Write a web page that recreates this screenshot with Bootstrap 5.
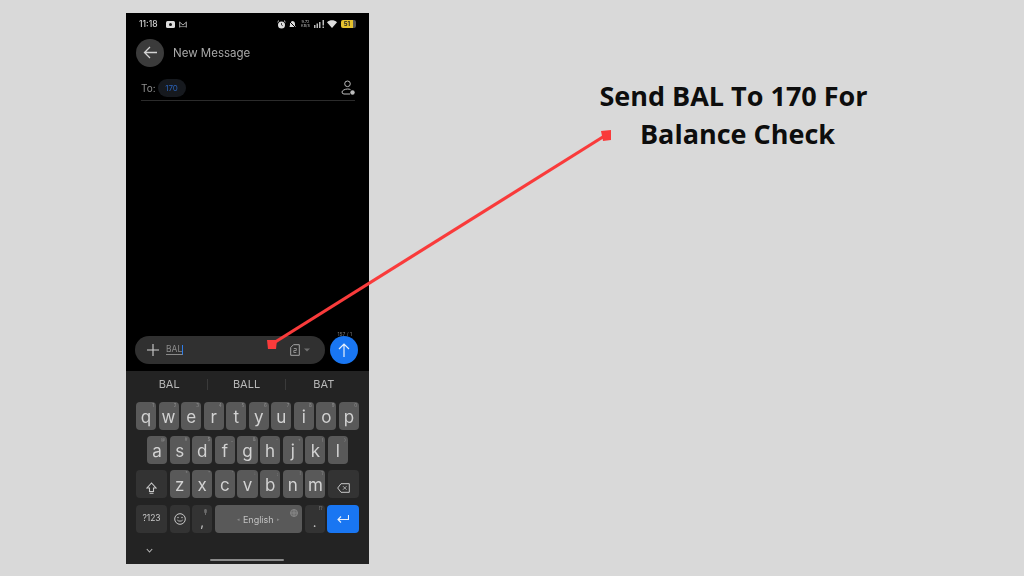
<!DOCTYPE html>
<html lang="en">
<head>
<meta charset="utf-8">
<title>Send BAL To 170</title>
<link href="https://cdn.jsdelivr.net/npm/bootstrap@5.3.0/dist/css/bootstrap.min.css" rel="stylesheet">
<style>
html,body{height:100%;margin:0}
body{background:#d9d9d9;width:1024px;height:576px;overflow:hidden;font-family:"Inter","Noto Sans",sans-serif}
.stage{width:1024px;height:576px;padding:13px 0 0 126px}
.phone{width:243px;height:551px;background:#000;color:#c9c9c9;filter:blur(.4px)}
.statusline{height:23px;padding:0 13px 0 13px;font-size:8.5px;color:#d5d5d5;font-weight:500}
.statusright{gap:4px}
.pull-in{margin-left:-2px}
.appbar{height:34px;padding:2px 10px 0;gap:9px;font-size:11.5px;color:#a9a9a9}
.backbtn{width:28px;height:28px;background:#3b3b3b;border-radius:50%;margin-top:-2px}
.toline{height:31px;margin:0 14px 0 15px;border-bottom:1px solid #2b2b2b;font-size:10px;color:#8f8f8f;padding-top:6px}
.toline span:first-child{padding-top:1px}
.chip{background:#16191e;color:#2a62b8;border-radius:10px;height:18px;width:28px;font-size:8px;margin-left:2px}
.spacer{height:232px}
.composer{height:35px;padding:0 11px 0 9px;position:relative}
.inputpill{width:190px;height:28px;background:#303030;border-radius:14px;padding:0 15px 0 12px;color:#8c8c8c;font-size:8.5px}
.typed{border-bottom:1px solid #8a8a8a;line-height:9px;margin-left:7px;border-right:1.2px solid #2f7de8}
.counter{position:absolute;right:17px;top:-2px;font-size:5px;color:#777}
.sendbtn{width:28px;height:28px;background:#1976f2;border-radius:50%}
.kbd-pane{background:#232323;margin-top:3px;padding-top:1px}
.suggest{height:24px;font-size:11px;color:#b8b8b8;padding:1px 7px 0 5px}
.suggest span{flex:1 1 0;text-align:center}
.suggest span+span{border-left:1px solid #3a3a3a;line-height:11px}
.keyrow{height:28px;margin-bottom:6.3px;gap:2.5px;padding:0 10px}
.keyrow.inset{padding:0 21px}
.keyrow.first{margin-top:6px}
.kk{flex:1 1 0;height:28px;border-radius:4px;background:#595959;color:#d2d2d2;font-size:17px;position:relative;line-height:1;padding-top:7px}
.kk sup{position:absolute;top:2px;right:2px;font-size:4.5px;color:#8e8e8e;line-height:1}
.kk.dark{background:#333;color:#c9c9c9}
.kk.shift,.kk.back,.kk.sym{flex:0 0 31px}
.kk.sym{font-size:8.5px;padding-top:0}
.kk.emoji,.kk.comma,.kk.dot{flex:0 0 20px;padding-top:0}
.kk.space{flex:0 0 87.5px;font-size:9px;padding-top:1px;color:#c2c2c2;gap:3px}
.kk.enter{flex:0 0 32px;background:#1976f2;padding-top:0}
.kk.comma,.kk.dot{font-size:13px;padding-top:8px}
.tiny-tri{font-size:5px;color:#888}
.kbfoot{height:25px;padding:9px 20px 0;position:relative}
.homebar{position:absolute;left:84px;top:20px;width:74px;height:2px;background:#8a8a8a;border-radius:1px}
.caption{position:absolute;left:580px;top:77px;width:307px;font-family:"Open Sans","Noto Sans",sans-serif;font-weight:700;font-size:27px;line-height:38px;color:#0d0d0d;text-align:center;margin:0}
.caption-second{display:block;padding-left:8px}
.pointer{position:absolute;left:0;top:0;width:1024px;height:576px;pointer-events:none}
.batt{background:#e5c12e;color:#222;font-size:6px;font-weight:700;width:12px;height:8px;border-radius:2px 0 0 2px;line-height:8px;text-align:center}
.batt-rest{background:#555;width:3px;height:8px;border-radius:0 2px 2px 0}
.netspeed{font-size:3.8px;line-height:4.2px;color:#a5a5a5;text-align:center;width:9px}
</style>
</head>
<body>
<div class="stage">
  <div class="phone d-flex flex-column">
    <div class="statusline d-flex align-items-center justify-content-between">
      <div class="d-flex align-items-center gap-1">
        <span class="me-1">11:18</span>
        <svg width="9" height="7" viewBox="0 0 9 7"><rect width="9" height="7" rx="1.5" fill="#ddd"/><circle cx="4.5" cy="3.5" r="1.5" fill="#111"/></svg>
        <svg width="8" height="7" viewBox="0 0 8 7" fill="none" stroke="#aaa"><path d="M.7 6.500V.8M7.300 6.500V.8M.7 1.200 4 4l3.300-2.800"/><path d="M.7 5.600h6.600" stroke-width=".7"/></svg>
      </div>
      <div class="statusright d-flex align-items-center">
        <svg width="9" height="9" viewBox="0 0 9 9"><circle cx="4.5" cy="5" r="3.5" fill="#ddd"/><path d="M4.500 3v2l1.300.8" stroke="#222" stroke-width=".8" fill="none"/><path d="M.5 2 2 .6M8.500 2 7 .6" stroke="#ddd"/></svg>
        <svg class="pull-in" width="9" height="9" viewBox="0 0 9 9"><path d="M4 1c2 0 3 1.300 3 3v2l1 1H1.500L2 5V3z" fill="#ddd"/><path d="M1 1l7 7" stroke="#000"/></svg>
        <div class="netspeed">9.72<br>KB/S</div>
        <svg width="11" height="8" viewBox="0 0 11 8" fill="#bbb"><rect y="5" width="1.500" height="3"/><rect x="2.500" y="3.500" width="1.500" height="4.500"/><rect x="5" y="2" width="1.500" height="6"/><rect x="8.500" y="0" width="1.500" height="5.500"/><rect x="8.500" y="6.500" width="1.500" height="1.500"/></svg>
        <svg class="pull-in" width="10" height="8" viewBox="0 0 10 8"><path d="M0 2.200C3 -.4 7 -.4 10 2.200L5 8z" fill="#ddd"/></svg>
        <div class="d-flex align-items-center"><span class="batt">51</span><span class="batt-rest"></span></div>
      </div>
    </div>

    <div class="appbar d-flex align-items-center">
      <div class="backbtn d-flex align-items-center justify-content-center">
        <svg width="15" height="13" viewBox="0 0 15 13" fill="none" stroke="#d3d3d3" stroke-width="1.300"><path d="M14 6.500H1.500M7 1 1.500 6.500 7 12"/></svg>
      </div>
      <span>New Message</span>
    </div>

    <div class="toline d-flex align-items-center">
      <span>To:</span>
      <span class="chip d-flex align-items-center justify-content-center">170</span>
      <svg class="ms-auto" width="14" height="16" viewBox="0 0 14 16" fill="none" stroke="#bdbdbd" stroke-width="1"><circle cx="6.500" cy="3.800" r="2.800"/><path d="M9 14H3a2 2 0 0 1-2-2c0-1.500 3-3 5.500-3 1.200 0 2.200.2 3 .6"/><circle cx="11.500" cy="12.500" r="2.200" fill="#bdbdbd" stroke="none"/></svg>
    </div>

    <div class="spacer"></div>

    <div class="composer d-flex align-items-center justify-content-between">
      <span class="counter">157 / 1</span>
      <div class="inputpill d-flex align-items-center">
        <svg width="12" height="12" viewBox="0 0 13 13" stroke="#cfcfcf" stroke-width="1.200"><path d="M6.500 0v13M0 6.500h13"/></svg>
        <span class="typed">BAL</span>
        <svg class="ms-auto" width="10" height="12" viewBox="0 0 10 12" fill="none" stroke="#a5a5a5"><path d="M3.500.7H9.300V11.300H.7V3.500z"/><path d="M3.800 4.500h2.500v2H3.800v2h2.500" stroke-width=".8"/></svg>
        <svg class="ms-1" width="6" height="4" viewBox="0 0 6 4"><path d="M0 .5h6L3 3.500z" fill="#6f6f6f"/></svg>
      </div>
      <div class="sendbtn d-flex align-items-center justify-content-center">
        <svg width="12" height="14" viewBox="0 0 12 14" fill="none" stroke="#e8f0fb" stroke-width="1.200"><path d="M6 14V1M1 6l5-5 5 5"/></svg>
      </div>
    </div>

    <div class="kbd-pane flex-grow-1">
      <div class="suggest d-flex align-items-center">
        <span>BAL</span><span>BALL</span><span>BAT</span>
      </div>
      <div class="keyrow first d-flex">
        <div class="kk text-center">q<sup>1</sup></div><div class="kk text-center">w<sup>2</sup></div><div class="kk text-center">e<sup>3</sup></div><div class="kk text-center">r<sup>4</sup></div><div class="kk text-center">t<sup>5</sup></div><div class="kk text-center">y<sup>6</sup></div><div class="kk text-center">u<sup>7</sup></div><div class="kk text-center">i<sup>8</sup></div><div class="kk text-center">o<sup>9</sup></div><div class="kk text-center">p<sup>0</sup></div>
      </div>
      <div class="keyrow inset d-flex">
        <div class="kk text-center">a<sup>@</sup></div><div class="kk text-center">s<sup>#</sup></div><div class="kk text-center">d<sup>$</sup></div><div class="kk text-center">f<sup>_</sup></div><div class="kk text-center">g<sup>&amp;</sup></div><div class="kk text-center">h<sup>-</sup></div><div class="kk text-center">j<sup>+</sup></div><div class="kk text-center">k<sup>(</sup></div><div class="kk text-center">l<sup>)</sup></div>
      </div>
      <div class="keyrow d-flex">
        <div class="kk dark shift d-flex align-items-center justify-content-center">
          <svg width="11" height="12" viewBox="0 0 11 12" fill="none" stroke="#c9c9c9" stroke-width="1.100"><path d="M5.500 1 1 6h2.500v3.500h4V6H10zM3.500 11.300h4"/></svg>
        </div>
        <div class="kk text-center">z<sup>*</sup></div><div class="kk text-center">x<sup>"</sup></div><div class="kk text-center">c<sup>'</sup></div><div class="kk text-center">v<sup>:</sup></div><div class="kk text-center">b<sup>;</sup></div><div class="kk text-center">n<sup>!</sup></div><div class="kk text-center">m<sup>?</sup></div>
        <div class="kk dark back d-flex align-items-center justify-content-center">
          <svg width="13" height="10" viewBox="0 0 13 10" fill="none" stroke="#c9c9c9"><path d="M4 .7h8.300v8.600H4L.7 5z"/><path d="M6 3.200l3.500 3.500M9.500 3.200 6 6.700" stroke-width=".8"/></svg>
        </div>
      </div>
      <div class="keyrow d-flex">
        <div class="kk dark sym d-flex align-items-center justify-content-center">?123</div>
        <div class="kk dark emoji d-flex align-items-center justify-content-center">
          <svg width="12" height="12" viewBox="0 0 12 12" fill="none" stroke="#c9c9c9"><circle cx="6" cy="6" r="5.300"/><path d="M3.300 7c.5 1.500 4.900 1.500 5.400 0" stroke-width=".9"/><circle cx="4" cy="4.500" r=".7" fill="#c9c9c9" stroke="none"/><circle cx="8" cy="4.500" r=".7" fill="#c9c9c9" stroke="none"/></svg>
        </div>
        <div class="kk dark comma d-flex align-items-center justify-content-center">,<svg class="position-absolute top-0 end-0 mt-1 me-1" width="5" height="6" viewBox="0 0 5 6" fill="#6d6d6d"><rect x="1.200" width="2.600" height="4.200" rx="1.300"/><rect x="2" y="4" width="1" height="2"/></svg></div>
        <div class="kk space d-flex align-items-center justify-content-center">
          <span class="tiny-tri">&#9666;</span>English<span class="tiny-tri">&#9656;</span>
          <svg class="position-absolute top-0 end-0 mt-1 me-1" width="8" height="8" viewBox="0 0 8 8" fill="none" stroke="#8a8a8a" stroke-width=".9"><circle cx="4" cy="4" r="3.500" fill="#6c6c6c"/><path d="M.5 4h7M4 .5v7"/></svg>
        </div>
        <div class="kk dark dot d-flex align-items-center justify-content-center">.<sup>!?</sup></div>
        <div class="kk enter d-flex align-items-center justify-content-center">
          <svg width="12" height="8" viewBox="0 0 12 8" fill="none" stroke="#e8f0fb" stroke-width="1.100"><path d="M11.500 0v4.500H1M4 1.500 1 4.500l3 3"/></svg>
        </div>
      </div>
      <div class="kbfoot">
        <svg class="d-block" width="7" height="5" viewBox="0 0 7 5" fill="none" stroke="#b5b5b5" stroke-width="1.100"><path d="M.8 1 3.500 4 6.200 1"/></svg>
        <div class="homebar"></div>
      </div>
    </div>
  </div>
</div>

<h1 class="caption">Send BAL To 170 For<span class="caption-second">Balance Check</span></h1>

<svg class="pointer" viewBox="0 0 1024 576">
  <path d="M272 344 606 135" stroke="#f93b3b" stroke-width="3.200" fill="none"/>
  <path d="M601 131 611 130 611 140 603 141z" fill="#f93b3b"/>
  <path d="M267 340 277 340 276 349 268 349z" fill="#f93b3b"/>
</svg>
</body>
</html>
